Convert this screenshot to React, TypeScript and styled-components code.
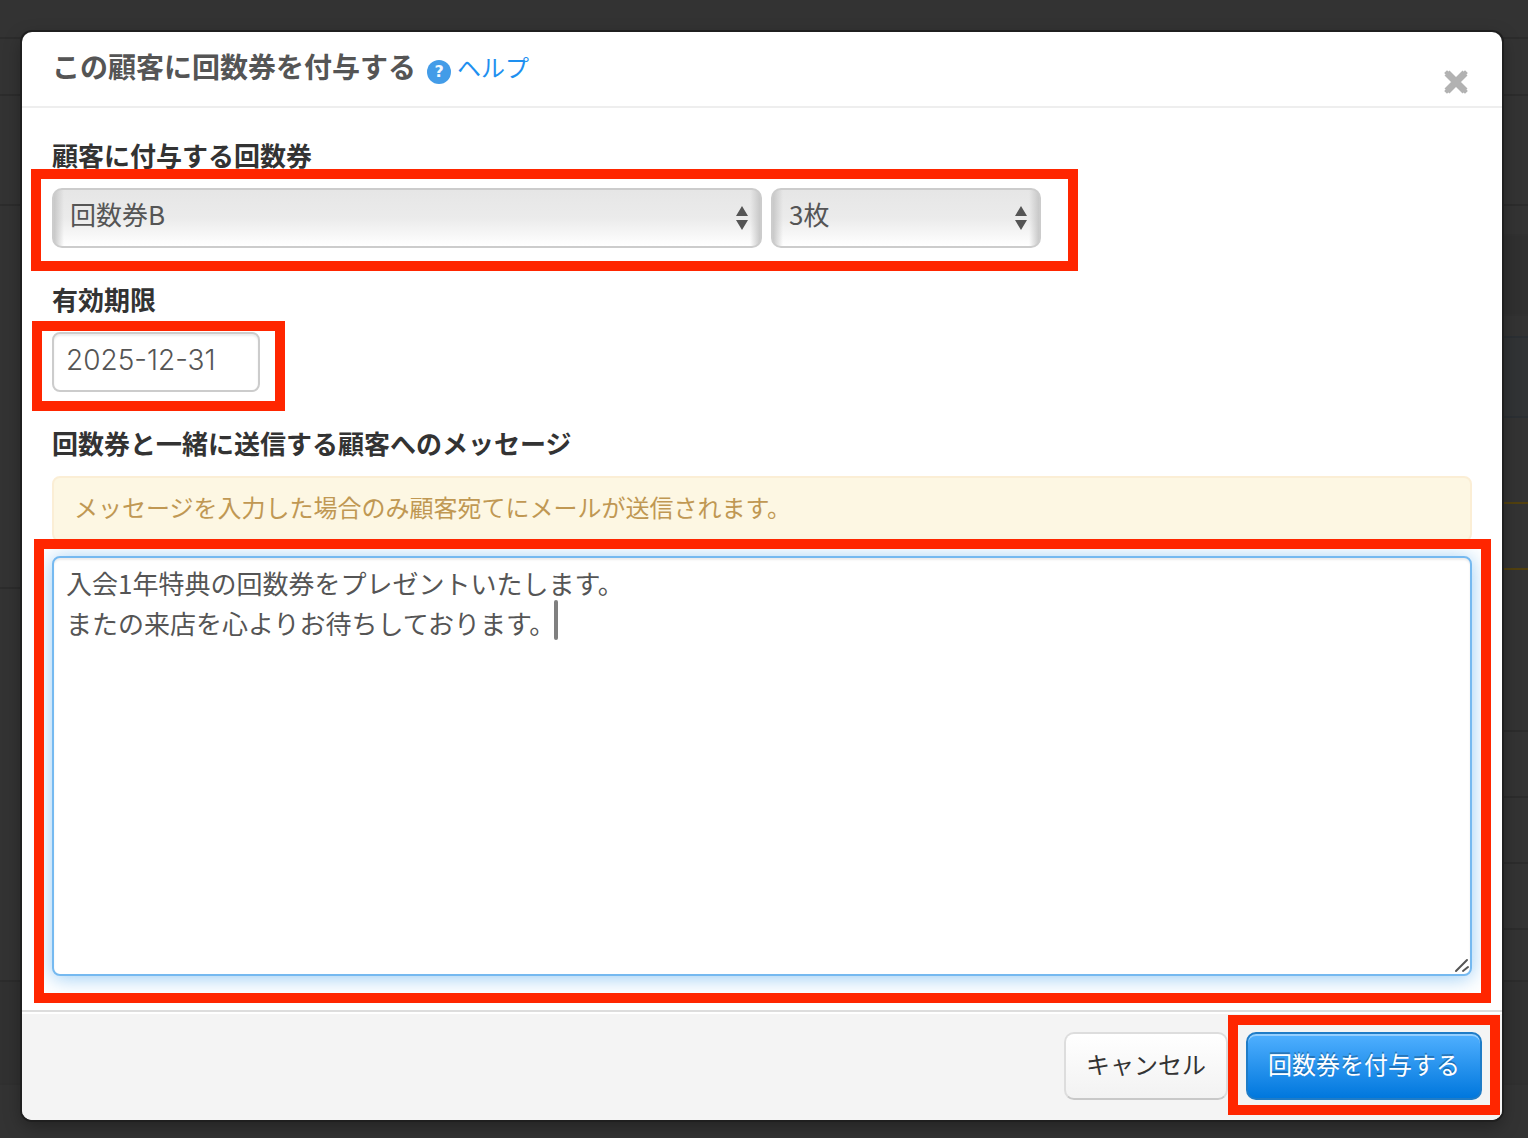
import React, { useState } from "react";
import styled, { createGlobalStyle, css } from "styled-components";

const jp = `"Noto Sans CJK JP", sans-serif`;

const GlobalStyle = createGlobalStyle`
  *, *::before, *::after { box-sizing: border-box; }
  body {
    margin: 0;
    background: #333;
    color: #333;
    font-family: ${jp};
  }
`;

/* Dimmed page behind the dialog */
const Page = styled.div`
  display: grid;
  min-height: 100vh;
  overflow: hidden;
`;

const Backdrop = styled.div`
  grid-area: 1 / 1;
  display: grid;
  grid-template-columns: 1fr 1fr;
`;

const BackdropColumn = styled.div`
  display: flex;
  flex-direction: column;
`;

const BackdropRow = styled.div<{ $h: number; $line?: string; $bg?: string }>`
  flex: 0 0 ${(p) => p.$h}px;
  border-bottom: 2px solid ${(p) => p.$line || "#2c2c2c"};
  background: ${(p) => p.$bg || "#333"};
`;

const Stage = styled.div`
  grid-area: 1 / 1;
  position: relative;
  padding: 32px 26px 18px 22px;
`;

const Dialog = styled.section`
  display: flex;
  flex-direction: column;
  background: #fff;
  border-radius: 10px;
  box-shadow: 0 0 0 2px #1f1f1f, 0 6px 18px rgba(0, 0, 0, 0.35);
`;

const Header = styled.header`
  display: flex;
  align-items: flex-start;
  height: 76px;
  padding: 14px 30px 0;
  border-bottom: 2px solid #eee;
`;

const Title = styled.h1`
  margin: 0;
  font-size: 28px;
  line-height: 40px;
  font-weight: 700;
  color: #555;
`;

const HelpLink = styled.a`
  display: flex;
  align-items: flex-start;
  gap: 6px;
  margin-left: 11px;
  font-size: 24px;
  line-height: 42px;
  color: #1e90f0;
  text-decoration: none;
`;

const HelpBadge = styled.span`
  width: 24px;
  height: 24px;
  margin-top: 14px;
  border-radius: 50%;
  background: #439ce8;
  color: #f2f9ff;
  font: bold 16px/24px "DejaVu Sans", sans-serif;
  text-align: center;
`;

const CloseButton = styled.button`
  display: flex;
  margin: 23px 3px 0 auto;
  padding: 0;
  border: 0;
  background: none;
  color: #b2b2b2;
  cursor: pointer;
`;

const Body = styled.div`
  display: flex;
  flex-direction: column;
  gap: 32px;
  padding: 28px 30px 34px;
`;

const Field = styled.div`
  display: flex;
  flex-direction: column;
  align-items: flex-start;
`;

const Label = styled.label`
  margin-bottom: 14px;
  font-size: 26px;
  line-height: 38px;
  font-weight: 700;
  color: #333;
`;

/* Wraps a control that carries a red highlight frame */
const Marked = styled.div<{ $fill?: boolean }>`
  position: relative;
  display: flex;
  gap: 9px;
  max-width: 100%;
  ${(p) => p.$fill && css`width: 100%;`}
`;

const Highlight = styled.div<{ $inset: string }>`
  position: absolute;
  inset: ${(p) => p.$inset};
  border: 10px solid #ff2600;
  pointer-events: none;
`;

const controlText = css`
  font-family: ${jp};
  font-size: 26px;
  color: #555;
`;

const SelectBox = styled.div<{ $w: number }>`
  position: relative;
  flex: 0 1 ${(p) => p.$w}px;
  width: ${(p) => p.$w}px;
`;

const Select = styled.select`
  ${controlText}
  appearance: none;
  display: block;
  width: 100%;
  height: 60px;
  padding: 0 40px 10px 16px;
  border: 2px solid #ccc;
  border-radius: 10px;
  background:
    linear-gradient(90deg, #c8c8c8, rgba(200, 200, 200, 0) 10px),
    linear-gradient(270deg, #c8c8c8, rgba(200, 200, 200, 0) 10px),
    linear-gradient(#e6e6e6, #ebebeb 50%, #fff);
`;

const Arrows = styled.svg`
  position: absolute;
  top: 18px;
  right: 14px;
  fill: #555;
  pointer-events: none;
`;

const DateInput = styled.input`
  width: 208px;
  height: 60px;
  padding: 0 12px 4px;
  border: 2px solid #ccc;
  border-radius: 8px;
  background: #fff;
  box-shadow: inset 0 2px 2px rgba(0, 0, 0, 0.075);
  color: #555;
  font-family: Inter, sans-serif;
  font-size: 28px;
  font-weight: 300;
`;

const Notice = styled.p`
  align-self: stretch;
  margin: 0 0 14px;
  padding: 9px 20px 13px;
  border: 2px solid #fbeed5;
  border-radius: 8px;
  background: #fdf7e3;
  font-size: 24px;
  line-height: 40px;
  color: #c09853;
`;

const MessageArea = styled.textarea`
  ${controlText}
  display: block;
  width: 100%;
  height: 420px;
  padding: 5px 12px;
  border: 2px solid #75b9f0;
  border-radius: 8px;
  outline: 0;
  resize: none;
  line-height: 40px;
  background: #fff;
  box-shadow: inset 0 2px 2px rgba(0, 0, 0, 0.075),
    0 2px 20px rgba(82, 168, 236, 0.6);
`;

const Caret = styled.span`
  position: absolute;
  top: 44px;
  left: 502px;
  width: 4px;
  height: 40px;
  border-radius: 2px;
  background: #808080;
`;

const Grip = styled.svg`
  position: absolute;
  right: 2px;
  bottom: 2px;
  stroke: #555;
  stroke-width: 2;
  stroke-linecap: round;
  pointer-events: none;
`;

const Footer = styled.footer`
  display: flex;
  justify-content: flex-end;
  gap: 18px;
  padding: 20px 20px;
  border-top: 2px solid #ddd;
  border-radius: 0 0 10px 10px;
  background: #f4f4f4;
  box-shadow: inset 0 2px 0 #fff;
`;

const Button = styled.button<{ $primary?: boolean }>`
  height: 68px;
  padding: 0 20px 6px;
  border: 2px solid #ddd;
  border-bottom-color: #c8c8c8;
  border-radius: 10px;
  background: linear-gradient(#fff, #f2f2f2);
  color: #333;
  font-family: ${jp};
  font-size: 24px;
  white-space: nowrap;
  cursor: pointer;
  ${(p) =>
    p.$primary &&
    css`
      border-color: #1f7cc7;
      background: linear-gradient(#50b0ff, #0077dd);
      box-shadow: inset 0 2px 0 rgba(255, 255, 255, 0.4);
      color: #fff;
      text-shadow: 0 -2px 0 rgba(0, 0, 0, 0.25);
    `}
`;

type Row = { h: number; line?: string; bg?: string };

const leftRows: Row[] = [
  { h: 39 },
  { h: 57 },
  { h: 110 },
  { h: 383 },
  { h: 393 },
  { h: 103, line: "#303030", bg: "#313131" },
];

const rightRows: Row[] = [
  { h: 39 },
  { h: 57 },
  { h: 110 },
  { h: 30, line: "#313131" },
  { h: 80, line: "#313131", bg: "#303030" },
  { h: 22, line: "#2b2f33" },
  { h: 80, line: "#2b2f33", bg: "#313335" },
  { h: 86, line: "#51400f" },
  { h: 66, line: "#51400f" },
  { h: 162 },
  { h: 66 },
  { h: 66 },
  { h: 66 },
  { h: 52 },
  { h: 103, line: "#303030", bg: "#313131" },
];

function SelectArrows() {
  return (
    <Arrows width="12" height="24" viewBox="0 0 12 24" aria-hidden="true">
      <path d="M6 0L12 10H0zM0 14H12L6 24z" />
    </Arrows>
  );
}

export default function App() {
  const [ticket, setTicket] = useState("回数券B");
  const [count, setCount] = useState("3枚");
  const [expiry, setExpiry] = useState("2025-12-31");
  const [message, setMessage] = useState(
    "入会1年特典の回数券をプレゼントいたします。\nまたの来店を心よりお待ちしております。"
  );

  return (
    <Page>
      <GlobalStyle />
      <Backdrop aria-hidden="true">
        {[leftRows, rightRows].map((rows, side) => (
          <BackdropColumn key={side}>
            {rows.map((r, i) => (
              <BackdropRow key={i} $h={r.h} $line={r.line} $bg={r.bg} />
            ))}
          </BackdropColumn>
        ))}
      </Backdrop>
      <Stage>
        <Dialog role="dialog" aria-labelledby="dialog-title">
          <Header>
            <Title id="dialog-title">この顧客に回数券を付与する</Title>
            <HelpLink href="#help">
              <HelpBadge aria-hidden="true">?</HelpBadge>
              ヘルプ
            </HelpLink>
            <CloseButton type="button" aria-label="閉じる">
              <svg width="26" height="26" viewBox="0 0 26 26" aria-hidden="true">
                <path
                  d="M4 4L22 22M22 4L4 22"
                  stroke="currentColor"
                  strokeWidth="7"
                />
                <path
                  d="M4 4L22 22M22 4L4 22"
                  stroke="currentColor"
                  strokeWidth="4"
                  strokeLinecap="square"
                />
              </svg>
            </CloseButton>
          </Header>

          <Body>
            <Field>
              <Label htmlFor="ticket">顧客に付与する回数券</Label>
              <Marked>
                <SelectBox $w={710}>
                  <Select
                    id="ticket"
                    value={ticket}
                    onChange={(e) => setTicket(e.target.value)}
                  >
                    <option>回数券B</option>
                  </Select>
                  <SelectArrows />
                </SelectBox>
                <SelectBox $w={270}>
                  <Select
                    aria-label="枚数"
                    value={count}
                    onChange={(e) => setCount(e.target.value)}
                  >
                    <option>3枚</option>
                  </Select>
                  <SelectArrows />
                </SelectBox>
                <Highlight $inset="-19px -37px -23px -21px" />
              </Marked>
            </Field>

            <Field>
              <Label htmlFor="expiry">有効期限</Label>
              <Marked>
                <DateInput
                  id="expiry"
                  type="text"
                  value={expiry}
                  onChange={(e) => setExpiry(e.target.value)}
                />
                <Highlight $inset="-11px -25px -19px -20px" />
              </Marked>
            </Field>

            <Field>
              <Label htmlFor="message">回数券と一緒に送信する顧客へのメッセージ</Label>
              <Notice>メッセージを入力した場合のみ顧客宛てにメールが送信されます。</Notice>
              <Marked $fill>
                <MessageArea
                  id="message"
                  value={message}
                  onChange={(e) => setMessage(e.target.value)}
                />
                <Caret />
                <Grip width="16" height="16" viewBox="0 0 16 16" aria-hidden="true">
                  <path d="M2 13L13 2M9 13L14 9" />
                </Grip>
                <Highlight $inset="-17px -19px -27px -18px" />
              </Marked>
            </Field>
          </Body>

          <Footer>
            <Button type="button">キャンセル</Button>
            <Marked>
              <Button type="submit" $primary>
                回数券を付与する
              </Button>
              <Highlight $inset="-17px -18px -15px" />
            </Marked>
          </Footer>
        </Dialog>
      </Stage>
    </Page>
  );
}
